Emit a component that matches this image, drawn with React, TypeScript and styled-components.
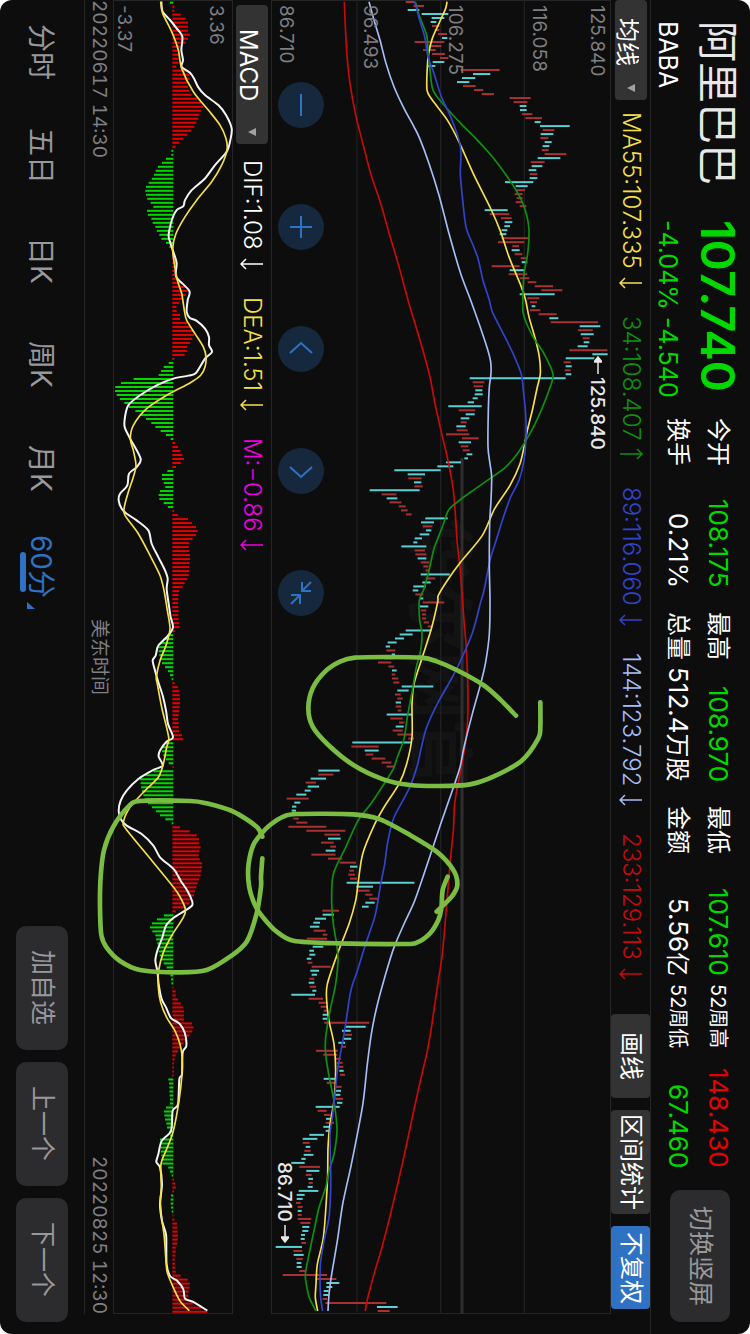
import React from 'react';
import styled, { createGlobalStyle } from 'styled-components';

/* The terminal is held sideways: the inline axis runs down the window
   and the block axis runs from right to left. */

const color = {
  bg: '#0d0d0d',
  line: '#262627',
  up: '#e60000',
  down: '#00d800',
  text: '#ffffff',
  muted: '#98989d',
  axis: '#7f7f84',
  panel: '#333333',
  button: '#2c2c2e',
  accent: '#2f72c4',
  yellow: '#f5e04a',
  green: '#109010',
  blue: '#3344cc',
  pale: '#a6bdf5',
  red: '#c80a0a',
  magenta: '#f000e0',
};

const GlobalStyle = createGlobalStyle`
  * { box-sizing: border-box; }
  body { margin: 0; background: #fff; }
  button, select { font: inherit; color: inherit; border: 0; padding: 0; margin: 0; cursor: pointer; writing-mode: inherit; text-orientation: inherit; }
`;

const Screen = styled.main`
  position: relative;
  writing-mode: vertical-rl;
  text-orientation: sideways;
  display: flex;
  flex-direction: column;
  inline-size: 100vh;
  block-size: 100vw;
  overflow: hidden;
  border-radius: 12px;
  background: ${color.bg};
  color: ${color.text};
  font-family: Inter, 'Noto Sans CJK SC', sans-serif;
  font-size: 24px;
  line-height: 1;
  white-space: nowrap;
`;

const Header = styled.header`
  display: flex;
  align-items: flex-start;
  block-size: 100px;
  padding-inline: 21px 12px;
  border-block-end: 1px solid ${color.line};
`;

const Stack = styled.div<{ $size: number }>`
  display: flex;
  flex-direction: column;
  inline-size: ${(p) => p.$size}px;
  flex: none;
`;

const Title = styled.h1`
  margin: 0;
  font-size: 41px;
  font-weight: 400;
  line-height: 64px;
  color: #e8e8e8;
`;

const Code = styled.span`
  font-size: 25px;
  line-height: 36px;
`;

const Price = styled.strong`
  font-size: 47px;
  font-weight: 600;
  line-height: 64px;
  color: ${color.down};
`;

const Change = styled.span`
  font-size: 25px;
  line-height: 36px;
  color: ${color.down};
`;

const Stats = styled.dl`
  display: grid;
  grid-template-columns: 170px 170px 170px 184px;
  grid-template-rows: 40px 40px;
  column-gap: 24px;
  margin: 0;
  padding-block-start: 12px;
`;

const Stat = styled.div<{ $small?: boolean }>`
  display: flex;
  align-items: center;
  justify-content: space-between;
  margin-inline-start: ${(p) => (p.$small ? -16 : 0)}px;
  margin-inline-end: ${(p) => (p.$small ? 16 : 0)}px;
  dt { font-size: ${(p) => (p.$small ? 20 : 24)}px; }
`;

const Value = styled.dd<{ $tone?: string }>`
  margin: 0;
  font-size: 26px;
  color: ${(p) => p.$tone || color.text};
  small { font-size: 24px; }
`;

const RoundedButton = styled.button<{ $length: number; $depth: number }>`
  flex: none;
  inline-size: ${(p) => p.$length}px;
  block-size: ${(p) => p.$depth}px;
  border-radius: 10px;
  background: ${color.button};
  color: ${color.muted};
  font-size: 25px;
`;

const SwitchButton = styled(RoundedButton)`
  margin-inline-start: auto;
  margin-block-start: 20px;
`;

const IndicatorBar = styled.section<{ $start: number; $depth: number }>`
  display: flex;
  align-items: center;
  flex: none;
  block-size: ${(p) => p.$depth}px;
  padding-inline: ${(p) => p.$start}px 25px;
`;

const Picker = styled.label<{ $length: number; $start: number }>`
  position: relative;
  flex: none;
  display: block;
  inline-size: ${(p) => p.$length}px;
  block-size: 32px;
  select {
    appearance: none;
    inline-size: 100%;
    block-size: 100%;
    padding-inline-start: ${(p) => p.$start}px;
    padding-block-start: 8px;
    border-radius: 4px;
    background: ${color.panel};
  }
  svg {
    position: absolute;
    inset-inline-end: 8px;
    inset-block-start: 12px;
    pointer-events: none;
  }
`;

const Readings = styled.div<{ $start: number }>`
  display: flex;
  align-items: center;
  gap: 27px;
  margin-inline-start: ${(p) => p.$start}px;
`;

const Reading = styled.span<{ $tone: string }>`
  display: flex;
  align-items: center;
  gap: 8px;
  font-weight: 300;
  color: ${(p) => p.$tone};
`;

const Tools = styled.div`
  display: flex;
  gap: 12px;
  block-size: 100%;
  margin-inline-start: auto;
`;

const Tool = styled.button<{ $length: number; $active?: boolean }>`
  inline-size: ${(p) => p.$length}px;
  border-radius: 4px;
  background: ${(p) => (p.$active ? color.accent : color.panel)};
`;

const Panel = styled.section<{ $depth?: number }>`
  position: relative;
  flex: ${(p) => (p.$depth ? 'none' : '1')};
  block-size: ${(p) => (p.$depth ? `${p.$depth}px` : 'auto')};
  min-block-size: 0;
  margin-inline-end: 20px;
  border: 1px solid ${color.line};
`;

const PlotArea = styled.div`
  position: absolute;
  inset: -1px;
  svg {
    display: block;
    width: 100%;
    height: 100%;
  }
`;

const Watermark = styled.span`
  position: absolute;
  inset-block-start: 136px;
  inset-inline-start: 514px;
  font-size: 68px;
  font-weight: 700;
  color: #131313;
`;

const Scale = styled.ul`
  position: absolute;
  inset: 0;
  margin: 0;
  padding: 0;
  list-style: none;
  font-size: 19px;
  color: ${color.axis};
`;

const Tick = styled.li<{ $at: number }>`
  position: absolute;
  inset-inline-start: 4px;
  inset-block-start: ${(p) => p.$at}%;
`;

const Mark = styled.span<{ $inline: number; $block: number }>`
  position: absolute;
  display: flex;
  align-items: center;
  gap: 3px;
  inset-inline-start: ${(p) => p.$inline}px;
  inset-block-start: ${(p) => p.$block}px;
  font-size: 19px;
  font-weight: 500;
  color: #e8e8e8;
`;

const ChartControls = styled.div`
  position: absolute;
  display: flex;
  gap: 76px;
  inset-inline-start: 81px;
  inset-block-end: 6px;
`;

const RoundButton = styled.button`
  display: grid;
  place-items: center;
  inline-size: 46px;
  block-size: 46px;
  border-radius: 50%;
  background: #16283d;
  color: ${color.accent};
`;

const DateRow = styled.div`
  display: flex;
  align-items: center;
  justify-content: space-between;
  flex: none;
  block-size: 29px;
  margin-inline-end: 20px;
  border-block-end: 1px solid ${color.line};
  font-size: 19px;
  font-variant-numeric: tabular-nums;
  color: ${color.axis};
`;

const Footer = styled.footer`
  display: flex;
  align-items: center;
  justify-content: space-between;
  flex: none;
  block-size: 84px;
  padding-inline-end: 12px;
`;

const Tabs = styled.nav`
  display: flex;
`;

const Tab = styled.button<{ $active?: boolean }>`
  position: relative;
  inline-size: 104px;
  block-size: 60px;
  padding-block-start: 3px;
  background: none;
  font-size: 28px;
  color: ${(p) => (p.$active ? color.accent : color.muted)};
  svg { margin-inline-start: 4px; vertical-align: -4px; }
  &::after {
    content: '';
    display: ${(p) => (p.$active ? 'block' : 'none')};
    position: absolute;
    inset-inline-start: 32px;
    inset-block-end: 8px;
    inline-size: 40px;
    block-size: 6px;
    border-radius: 3px;
    background: ${color.accent};
  }
`;

const Actions = styled.div`
  display: flex;
  gap: 12px;
`;

const Drawing = styled.svg`
  position: absolute;
  inset: 0;
  width: 100%;
  height: 100%;
  pointer-events: none;
`;

/* One bar every 12 units: r = rising, c = falling, then low,high. */
const bars = `
r405,432 r429,460 c411,446 c453,533 c483,521 c480,497 r484,506 r492,506 r502,529 c514,530 r432,521 r475,512 r457,495 r484,523 r508,533
c486,521 c470,494 r570,687 c607,659 c574,614 c559,596 r577,615 r610,638 r633,670 r717,780 r729,770 c747,767 c748,768 r754,785 r764,814
c792,810 c808,897 r816,851 c810,848 r809,833 c822,843 c816,836 r813,834 r822,887 c801,869 r780,822 c783,815 c774,797 r777,800 c777,800
c703,788 c735,771 r735,763 r732,756 r738,756 r735,756 r747,767 c642,711 r657,716 r691,723 c702,725 c701,718 c693,710 c687,707 r693,776
r682,761 r725,745 c723,747 r732,755 r750,767 c753,770 r663,747 c717,761 r714,770 r747,776 r771,797 r792,847 r812,875 c747,852 r770,806
r778,799 c783,794 r778,809 r804,858 c836,863 r840,982 c927,989 r922,966 c930,969 r936,957 c939,956 c921,951 r896,1010 c965,1011 c885,971
r879,900 c885,903 r882,900 c885,902 c597,885 r606,641 r609,637 c614,635 c612,636 c606,621 c591,610 c533,633 r564,614 c585,612 c570,596
r570,588 c557,585 r558,591 r526,596 r574,624 c564,601 r570,593 r576,597 c588,605 c581,592 c526,571 c500,548 c371,510 c411,463 r413,453
c430,452 r431,456 c297,447 r333,377 c348,380 r357,392 r384,405 r391,411 r406,423 c464,531 c451,490 r456,485 c466,482 c447,476 c432,454
c428,440 c392,467 r432,463 r434,467 c441,467 r450,476 r458,473 r465,476 c450,537 r465,494 c455,480 c428,466 c426,443 r434,458 c446,458
r456,521 c447,473 r450,467 r454,466 r454,466 r459,475 r471,485 c405,482 c387,426 c373,400 c351,378 c345,358 r347,374 c363,373 r340,370
r322,362 r353,371 c364,378 r363,374 r364,383 r368,386 c393,488 c380,414 r373,390 r380,396 c375,391 r375,392 r381,392 c348,424 r359,396
r385,401 c375,399 r366,396 r380,425 r413,430 c245,422 r242,324 c282,324 r285,308 r303,344 r333,362 r348,371 c143,207 r143,188 c120,166
r105,136 c111,145 c102,120 c77,107 r48,114 c71,89 c64,77 c63,76 r66,84 r68,84 r77,110 r53,167 r107,224 r161,208 c172,210
r151,189 r179,196 c165,194 r122,195 r172,215 r207,256 c238,260 r236,250 r233,253 r238,259 c228,431 c257,307 r261,297 r284,305 r296,323
c284,312 c274,294 r155,205 c156,190 c133,166 c128,148 c118,146 r129,165 r156,170 r108,169 c125,160 c126,158 c116,130 c116,134 c108,122
r111,125 r123,180 c119,145 c123,139 r116,131 c114,131 r117,136 c125,137 c62,133 r114,157 r144,171 r150,170 r159,172 c156,171 c156,170
r161,296 c226,285 c214,240 r222,244 c219,242 c203,223 r214,226 r136,202 r158,200 r192,211 r198,216 r204,218 c206,219 r208,223 c159,196
r168,196 r196,213 c195,211 c192,209 r194,217 c199,215 c135,207 r141,168 r160,180 c166,180 r165,190 c158,180 c165,177 c116,160 c96,140
r96,117 c105,119 r101,120 c99,128 c92,105 c62,102 r86,148 c107,146 r105,123 c113,127 r114,126 c111,126 c84,143 c78,102 c78,96
r76,90 r81,96 c81,93 r81,93 r81,122 r89,119 c95,116 c95,113 c91,103 c90,102 r92,106 c15,94 r68,95 c69,99 r77,96
c78,92 c78,93 r86,104 r36,169 r134,197 c167,206 c167,185 c159,174 c158,174 r156,169 r164,347 c319,381 r321,357`
  .trim()
  .split(/\s+/)
  .map((item) => {
    const [low, high] = item.slice(1).split(',').map(Number);
    return { rising: item[0] === 'r', low, high };
  });

/* Histogram ends; values below the zero line are falling momentum. */
const ZERO = 247;
const momentum = `
240 253 253 272 287 294 294 294 300 294 287 270 268 268 266 265 259 290 299 299 290 294 297 305 322 334 340 334 328 325 319 313 304 292 280 268 256
244 244 228 216 204 197 192 186 176 168 166 168 172 182 190 171 174 184 188 196 201 208 214 228 238
251 254 259 262 262 260 262 264 278 289 298 287 278 267 259 260 270 270 292 304 311 312 307 300 292 291 284 253
236 221 213 206 131 93 76 75 80 90 103 117 136 152 168 184 196 212 228 242
255 264 271 277 282 272 258 232 216 216 221 226 210 206 208 221 234 252 264 294 306 318 323 318 308 298 296 298 300 300 299 297 297 296 292 284 278
268 266 265 264 265 266 265 266 268 269 254 232 220 210 205 206 208 212 216 225 234 240 245 254 264 268 269 270 270 269 268 266 264 266 266 267 276 280
228 218 216 220 228 236 251 190 166 150 152 153 156 160 164 174 186 198 210 226 245 270 299 320 327 328 332 328 326 329 336 336 334 332 327
323 319 315 312 305 299 288 257 222 201 186 180 187 196 198 202 204 206 209 215 221 230 240 241 243 244 250 257 257 264 272 280 282 282 282 306 310 307 298 291 281 273 264 257 254 252 252 252 251
235 237 238 238 239 240 240 228 222 223 225 229 231 238 240 210 213 212 212 214 214 217 235 240 245 252 256 257 252 243 242 242 243 245 250 253 261 262 263 264 263 262 257 257 256 254 255 256 257 272 293 300 299 296 295 291 310 335 352`
  .trim()
  .split(/\s+/)
  .map(Number);

const averages = [
  {
    tone: color.red,
    points:
      '221,5 224,80 229,165 238,250 255,345 274,420 300,520 330,610 357,705 385,800 412,900 430,960 455,1045 478,1130 492,1205 513,1300 532,1380 548,1470 555,1555 560,1630 568,1700 575,1790 580,1860 586,1930 590,2010 592,2090 590,2175 584,2230 572,2300 562,2350 552,2410 548,2490 541,2560 535,2630 529,2700 524,2760 515,2860 503,2940 494,3000 483,3075 470,3150 448,3245 425,3350 397,3480 362,3630 335,3735 310,3820 289,3900 284,3930',
  },
  {
    tone: color.yellow,
    points:
      '529,5 525,25 505,70 485,115 474,160 470,200 469,270 485,300 530,360 565,425 610,525 660,625 690,695 715,770 752,860 765,900 775,950 795,1020 806,1070 809,1120 800,1160 785,1230 770,1290 762,1330 748,1390 718,1455 672,1525 635,1605 570,1685 530,1740 503,1785 501,1805 482,1885 455,1970 430,2050 424,2110 424,2210 408,2290 385,2350 340,2420 310,2475 276,2560 262,2650 255,2700 235,2770 200,2860 170,2950 168,3000 175,3060 190,3130 195,3210 190,3300 178,3370 172,3440 171,3520 167,3600 158,3710 140,3790 136,3850 134,3890 141,3930',
  },
  {
    tone: color.green,
    points:
      '434,5 445,45 468,105 472,150 478,210 487,270 520,315 570,370 620,420 665,470 710,530 750,595 768,645 775,690 771,760 760,820 757,880 757,935 770,975 790,1015 820,1060 847,1122 835,1170 805,1245 775,1305 740,1360 705,1400 650,1440 600,1475 560,1505 533,1530 515,1580 490,1645 475,1710 460,1765 446,1800 447,1860 454,1900 450,1950 437,2000 425,2070 410,2150 400,2215 380,2270 368,2305 340,2350 300,2410 262,2460 225,2540 188,2620 183,2700 188,2770 198,2830 202,2880 195,2950 178,3030 165,3110 165,3160 174,3220 188,3290 194,3330 199,3390 190,3460 175,3510 165,3560 145,3620 130,3690 113,3770 104,3820 107,3850 116,3890 136,3930',
  },
  {
    tone: color.blue,
    points:
      '432,5 447,60 462,110 472,170 490,220 512,290 540,350 565,420 571,460 569,520 575,590 586,680 605,730 622,775 637,840 656,900 665,935 690,985 725,1055 752,1122 758,1170 765,1240 766,1310 760,1380 745,1440 720,1490 695,1560 675,1625 658,1680 640,1770 630,1805 606,1895 570,1980 545,2030 500,2110 468,2180 452,2240 440,2295 415,2365 370,2450 352,2520 342,2590 330,2650 322,2700 312,2750 285,2830 260,2910 243,2960 235,3000 225,3070 213,3140 200,3210 193,3280 185,3350 178,3400 180,3500 180,3570 175,3650 162,3710 150,3780 148,3830 150,3890 156,3930',
  },
  {
    tone: color.pale,
    points:
      '295,5 310,60 328,120 346,190 370,260 400,325 430,380 447,415 475,490 505,585 535,700 570,820 600,900 625,970 650,1045 660,1085 661,1120 656,1160 653,1230 652,1340 658,1390 663,1430 661,1500 657,1570 656,1700 658,1800 656,1900 645,1985 630,2050 605,2140 580,2240 568,2300 545,2370 510,2470 470,2590 432,2700 400,2770 370,2840 345,2920 318,3020 302,3100 290,3190 278,3300 262,3390 240,3500 216,3610 200,3720 183,3820 175,3880 172,3930',
  },
];

const dif =
  '214,5 218,35 240,60 260,85 277,110 274,150 279,180 275,200 300,218 312,235 325,262 345,285 385,315 408,345 425,385 421,420 410,455 375,495 345,535 305,570 285,600 280,618 260,630 247,655 238,690 236,710 245,740 255,770 260,790 257,820 262,835 298,872 293,900 290,935 300,953 320,962 345,985 357,1010 357,1035 366,1055 345,1075 318,1118 295,1126 250,1135 200,1155 150,1185 115,1215 105,1250 104,1280 121,1316 152,1375 140,1400 117,1420 112,1455 90,1480 86,1500 95,1525 110,1540 140,1560 175,1590 185,1630 205,1670 225,1710 233,1735 230,1765 236,1810 242,1850 249,1880 235,1905 205,1935 197,1965 188,1980 195,2010 205,2045 218,2085 228,2130 234,2170 249,2210 230,2223 210,2250 206,2268 218,2295 190,2308 145,2335 110,2370 92,2400 86,2430 92,2455 110,2475 155,2500 190,2535 210,2570 240,2595 255,2610 272,2640 292,2670 306,2700 306,2715 285,2730 250,2752 228,2775 217,2810 202,2850 196,2880 202,2910 206,2950 215,2995 228,3020 243,3052 268,3068 284,3095 289,3135 278,3155 276,3220 268,3235 264,3310 248,3330 243,3390 215,3420 205,3460 199,3483 210,3500 216,3550 210,3610 216,3660 228,3700 229,3740 230,3790 240,3825 262,3840 280,3865 285,3893 310,3903 352,3929';
const dea =
  '212,5 218,40 245,95 265,150 275,205 310,275 355,330 390,375 408,415 411,450 395,495 365,545 320,600 285,650 258,700 248,745 253,790 262,840 275,880 283,930 290,960 315,1000 340,1040 348,1070 345,1100 332,1125 300,1148 235,1182 170,1225 130,1275 121,1316 130,1350 138,1395 130,1430 115,1475 103,1520 105,1545 145,1600 180,1665 210,1725 222,1770 232,1830 240,1885 228,1935 210,1980 199,2030 202,2050 215,2120 236,2210 230,2240 220,2290 205,2330 165,2370 120,2420 100,2465 108,2485 165,2555 235,2640 265,2680 286,2725 280,2750 245,2805 220,2855 206,2910 205,2960 212,3005 230,3050 255,3090 270,3130 276,3165 276,3220 267,3300 250,3390 232,3440 213,3490 214,3560 211,3600 215,3650 223,3710 228,3780 232,3815 250,3860 270,3900 298,3929';

const strokes = {
  upper:
    '738,347 690,298 640,255 560,210 500,184 455,173 350,171 255,173 210,185 165,215 128,265 115,325 128,380 175,435 250,495 340,538 420,555 510,558 600,553 670,530 755,482 805,415 811,380 811,307',
  middle:
    '533,830 518,870 514,925 505,960 480,1000 440,1028 400,1032 200,1030 70,1022 20,995 -10,965 -40,925 -58,880 -65,840 -64,790 -50,735 -25,700 0,675 40,650 80,642 250,643 330,658 420,705 500,755 550,810 562,855 545,890 500,935',
  lower:
    '517,1190 500,1160 430,1115 350,1090 300,1083 150,1083 115,1100 70,1160 42,1230 32,1310 30,1400 34,1485 50,1523 90,1563 150,1590 270,1597 350,1590 420,1550 470,1505 500,1420 513,1340 513,1310 517,1255',
};

function smooth(source: string) {
  const p = source.split(' ').map((s) => s.split(',').map(Number));
  let d = `M${p[0][0]} ${p[0][1]}`;
  for (let i = 0; i < p.length - 1; i += 1) {
    const a = p[Math.max(i - 1, 0)];
    const b = p[i];
    const c = p[i + 1];
    const e = p[Math.min(i + 2, p.length - 1)];
    const k = 7;
    d += `C${b[0] + (c[0] - a[0]) / k} ${b[1] + (c[1] - a[1]) / k} ${c[0] - (e[0] - b[0]) / k} ${c[1] - (e[1] - b[1]) / k} ${c[0]} ${c[1]}`;
  }
  return d;
}

function Caret() {
  return (
    <svg width="8" height="8" viewBox="0 0 8 8" aria-hidden="true">
      <path d="M8 0V8L0 4Z" fill="#a0a0a5" />
    </svg>
  );
}

function Trend({ up }: { up?: boolean }) {
  return (
    <svg width="24" height="12" viewBox="0 0 24 12" fill="none" stroke="currentColor" strokeWidth="1.5" aria-hidden="true">
      <path d={up ? 'M1 6H23M18 1L23 6L18 11' : 'M23 6H1M6 1L1 6L6 11'} />
    </svg>
  );
}

function PriceArrow({ down }: { down?: boolean }) {
  return (
    <svg width="8" height="18" viewBox="0 0 8 18" aria-hidden="true">
      <path
        d={down ? 'M4 0V13M0 12H8L4 17Z' : 'M4 18V5M0 6H8L4 1Z'}
        fill="currentColor"
        stroke="currentColor"
        strokeWidth="1.5"
      />
    </svg>
  );
}

const icons = [
  { label: '缩小', d: 'M23 12V34' },
  { label: '放大', d: 'M23 12V34M12 23H34' },
  { label: '向左', d: 'M12 27L23 17L34 27' },
  { label: '向右', d: 'M12 19L23 29L34 19' },
  { label: '收起', d: 'M24 12V21H33M24 21L33 12M13 25H22V34M22 25L13 34' },
];

const topStats = [
  ['今开', '108.175', color.down],
  ['最高', '108.970', color.down],
  ['最低', '107.610', color.down],
  ['52周高', '148.430', color.up],
];

const readings = [
  { text: 'MA55:107.335', tone: color.yellow },
  { text: '34:108.407', tone: color.green, up: true },
  { text: '89:116.060', tone: color.blue },
  { text: '144:123.792', tone: color.pale },
  { text: '233:129.113', tone: color.red },
];

const tabs = ['分时', '五日', '日K', '周K', '月K', '60分'];

export default function App() {
  return (
    <>
      <GlobalStyle />
      <Screen>
        <Header>
          <Stack $size={199}>
            <Title>阿里巴巴</Title>
            <Code>BABA</Code>
          </Stack>
          <Stack $size={198}>
            <Price>107.740</Price>
            <Change>-4.04% -4.540</Change>
          </Stack>
          <Stats>
            {topStats.map(([name, value, tone], i) => (
              <Stat key={name} $small={i === 3}>
                <dt>{name}</dt>
                <Value $tone={tone}>{value}</Value>
              </Stat>
            ))}
            <Stat>
              <dt>换手</dt>
              <Value>0.21%</Value>
            </Stat>
            <Stat>
              <dt>总量</dt>
              <Value>
                512.4<small>万股</small>
              </Value>
            </Stat>
            <Stat>
              <dt>金额</dt>
              <Value>
                5.56<small>亿</small>
              </Value>
            </Stat>
            <Stat $small>
              <dt>52周低</dt>
              <Value $tone={color.down}>67.460</Value>
            </Stat>
          </Stats>
          <SwitchButton $length={132} $depth={60}>
            切换竖屏
          </SwitchButton>
        </Header>

        <IndicatorBar $start={0} $depth={39}>
          <Picker $length={100} $start={18}>
            <select aria-label="主图指标" defaultValue="均线">
              <option>均线</option>
            </select>
            <Caret />
          </Picker>
          <Readings $start={12}>
            {readings.map((r) => (
              <Reading key={r.text} $tone={r.tone}>
                {r.text}
                <Trend up={r.up} />
              </Reading>
            ))}
          </Readings>
          <Tools>
            <Tool $length={84}>画线</Tool>
            <Tool $length={104}>区间统计</Tool>
            <Tool $length={83} $active>
              不复权
            </Tool>
          </Tools>
        </IndicatorBar>

        <Panel>
          <Watermark aria-hidden="true">华尔网官</Watermark>
          <PlotArea>
            <svg viewBox="1 0 1020 3939" preserveAspectRatio="none" fill="none">
              <path d="M259 0V3939M510 0V3939M761 0V3939" stroke="#1f1f20" strokeWidth="4" />
              <path d="M574 1373V3939" stroke="#2e2e2e" strokeWidth="9" />
              {bars.map((bar, i) => (
                <path
                  key={i}
                  d={`M${bar.low} ${6 + i * 12}H${bar.high}`}
                  stroke={bar.rising ? '#a83232' : '#5ccfd2'}
                  strokeWidth="6"
                />
              ))}
              {averages.map((line) => (
                <path key={line.tone} d={smooth(line.points)} stroke={line.tone} strokeWidth="5" />
              ))}
            </svg>
          </PlotArea>
          <Scale>
            <Tick $at={1}>125.840</Tick>
            <Tick $at={18}>116.058</Tick>
            <Tick $at={43}>106.275</Tick>
            <Tick $at={68}>96.493</Tick>
            <Tick $at={93}>86.710</Tick>
          </Scale>
          <Mark $inline={355} $block={3}>
            <PriceArrow />
            125.840
          </Mark>
          <Mark $inline={1161} $block={316}>
            86.710
            <PriceArrow down />
          </Mark>
          <ChartControls>
            {icons.map((icon) => (
              <RoundButton key={icon.label} aria-label={icon.label}>
                <svg width="46" height="46" viewBox="0 0 46 46" fill="none" stroke="currentColor" strokeWidth="2">
                  <path d={icon.d} />
                </svg>
              </RoundButton>
            ))}
          </ChartControls>
        </Panel>

        <IndicatorBar $start={5} $depth={38}>
          <Picker $length={139} $start={24}>
            <select aria-label="副图指标" defaultValue="MACD">
              <option>MACD</option>
            </select>
            <Caret />
          </Picker>
          <Readings $start={16}>
            <Reading $tone={color.text}>
              DIF:1.08
              <Trend />
            </Reading>
            <Reading $tone={color.yellow}>
              DEA:1.51
              <Trend />
            </Reading>
            <Reading $tone={color.magenta}>
              M:−0.86
              <Trend />
            </Reading>
          </Readings>
        </IndicatorBar>

        <Panel $depth={120}>
          <Scale>
            <Tick $at={5}>3.36</Tick>
            <Tick $at={83}>-3.37</Tick>
          </Scale>
          <PlotArea>
            <svg viewBox="69 0 360 3939" preserveAspectRatio="none" fill="none">
              {momentum.map((end, i) => (
                <path
                  key={i}
                  d={`M${end > ZERO ? ZERO : ZERO + 3} ${8 + i * 12}H${end}`}
                  stroke={end > ZERO ? color.up : color.down}
                  strokeWidth="6"
                />
              ))}
              <path d={smooth(dif)} stroke="#f5f5f5" strokeWidth="6" />
              <path d={smooth(dea)} stroke={color.yellow} strokeWidth="5" />
            </svg>
          </PlotArea>
        </Panel>

        <DateRow>
          <time>20220617 14:30</time>
          <span>美东时间</span>
          <time>20220825 12:30</time>
        </DateRow>

        <Footer>
          <Tabs>
            {tabs.map((name) => {
              const active = name === '60分';
              return (
                <Tab key={name} $active={active}>
                  {name}
                  {active && (
                    <svg width="8" height="7" viewBox="0 0 8 7" aria-hidden="true">
                      <path d="M0 0V7H8Z" fill="currentColor" />
                    </svg>
                  )}
                </Tab>
              );
            })}
          </Tabs>
          <Actions>
            <RoundedButton $length={124} $depth={52}>加自选</RoundedButton>
            <RoundedButton $length={124} $depth={52}>上一个</RoundedButton>
            <RoundedButton $length={124} $depth={52}>下一个</RoundedButton>
          </Actions>
        </Footer>

        <Drawing
          viewBox="0 0 2250 4002"
          preserveAspectRatio="none"
          fill="none"
          stroke="#7bbd43"
          strokeWidth="14"
          strokeLinecap="round"
          strokeLinejoin="round"
          aria-hidden="true"
        >
          <g transform="translate(810 1800)">
            <path d={smooth(strokes.upper)} />
            <path d={smooth(strokes.middle)} />
          </g>
          <g transform="translate(270 1320)">
            <path d={smooth(strokes.lower)} />
          </g>
        </Drawing>
      </Screen>
    </>
  );
}
